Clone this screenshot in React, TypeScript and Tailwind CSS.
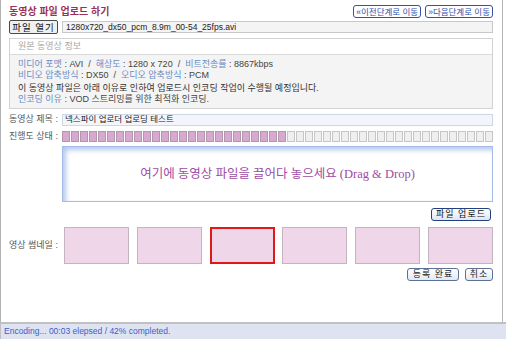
import React from 'react';

const FONT = { fontFamily: '"Liberation Sans", "Noto Sans CJK KR", sans-serif' };

const labelCls = 'text-[#6a8cc4]';
const valueCls = 'text-[#444]';

function SmallButton({ children, className = '' }: { children: React.ReactNode; className?: string }) {
  return (
    <button
      className={
        'h-[13px] whitespace-nowrap rounded-[3px] border border-[#5a7296] bg-gradient-to-b from-white to-[#e3e8f2] text-[9px] leading-[11px] tracking-[1px] text-[#222] ' +
        className
      }
    >
      {children}
    </button>
  );
}

export default function App() {
  const total = 48;
  const filled = 25;
  const cells = Array.from({ length: total }, (_, i) => i < filled);
  const thumbs = [0, 1, 2, 3, 4, 5];

  return (
    <div className="flex h-[339px] w-[506px] flex-col bg-white text-[11px]" style={FONT}>
      <div className="mr-[3px] flex flex-1 flex-col border-l border-r border-[#b4b4b4] pl-[8px] pr-[9px]">
        {/* title row */}
        <div className="mt-[5px] flex h-[13px] items-center justify-between">
          <div className="whitespace-nowrap text-[10px] font-bold text-[#9c2f58]">동영상 파일 업로드 하기</div>
          <div className="flex gap-[4px]">
            <button className="h-[13px] whitespace-nowrap rounded-[3px] border border-[#3552a6] bg-white px-[2px] text-[8.5px] leading-[10px] text-[#2d4cae]">
              «이전단계로 이동
            </button>
            <button className="h-[13px] whitespace-nowrap rounded-[3px] border border-[#3552a6] bg-white px-[2px] text-[8.5px] leading-[10px] text-[#2d4cae]">
              »다음단계로 이동
            </button>
          </div>
        </div>

        {/* file open row */}
        <div className="mt-[2px] flex items-center gap-[4px]">
          <button className="h-[14px] w-[49px] whitespace-nowrap rounded-[2px] border border-[#4a4a4a] bg-[#f0f0f0] text-[9.5px] leading-[11px] tracking-[1px] text-[#111]">
            파일 열기
          </button>
          <div className="flex h-[12px] flex-1 items-center border border-[#c8c8c8] bg-[#f4f4f4] pl-[3px] text-[8.5px] text-[#222]">
            1280x720_dx50_pcm_8.9m_00-54_25fps.avi
          </div>
        </div>

        {/* info box */}
        <div className="mt-[4px] h-[71px] border border-[#d2d2d2]">
          <div className="flex h-[16px] items-center border-b border-[#dadada] bg-white pl-[8px] text-[9px] text-[#a8a8a8]">
            원본 동영상 정보
          </div>
          <div className="h-[53px] whitespace-nowrap bg-[#f4f4f4] pl-[8px] pt-[4px] text-[9px] leading-[11px]">
            <div>
              <span className={labelCls}>미디어 포맷</span>
              <span className={valueCls}> : AVI &nbsp;/ &nbsp;</span>
              <span className={labelCls}>해상도</span>
              <span className={valueCls}> : 1280 x 720 &nbsp;/ &nbsp;</span>
              <span className={labelCls}>비트전송률</span>
              <span className={valueCls}> : 8867kbps</span>
            </div>
            <div>
              <span className={labelCls}>비디오 압축방식</span>
              <span className={valueCls}> : DX50 &nbsp;/ &nbsp;</span>
              <span className={labelCls}>오디오 압축방식</span>
              <span className={valueCls}> : PCM</span>
            </div>
            <div className="mt-[2px] text-[#333]">
              이 동영상 파일은 아래 이유로 인하여 업로드시 인코딩 작업이 수행될 예정입니다.
            </div>
            <div>
              <span className={labelCls}>인코딩 이유</span>
              <span className={valueCls}> : VOD 스트리밍를 위한 최적화 인코딩.</span>
            </div>
          </div>
        </div>

        {/* title row */}
        <div className="mt-[4px] flex items-center">
          <div className="w-[53px] shrink-0 whitespace-nowrap text-[9px] text-[#555]">동영상 제목 :</div>
          <div className="flex h-[12px] flex-1 items-center border border-[#cdd6e2] bg-[#f2f6fc] pl-[2px] text-[8.5px] text-[#222]">
            넥스파이 업로더 업로딩 테스트
          </div>
        </div>

        {/* progress row */}
        <div className="mt-[3px] flex items-center">
          <div className="w-[53px] shrink-0 whitespace-nowrap text-[9px] text-[#555]">진행도 상태 :</div>
          <div className="flex flex-1 gap-[1px]">
            {cells.map((on, i) => (
              <div
                key={i}
                className={
                  on
                    ? 'h-[11px] w-[8px] border border-[#b097ab] bg-[#d9a8d0]'
                    : 'h-[11px] w-[8px] border border-[#c6c6c6] bg-[#efefef]'
                }
              />
            ))}
          </div>
        </div>

        {/* drop zone */}
        <div className="ml-[53px] mt-[3px] flex h-[56px] items-center justify-center border border-[#a3bbe6] bg-white shadow-[inset_3px_3px_5px_#b4c8ee]">
          <span
            className="whitespace-nowrap text-[12.5px] text-[#a04ca6]"
            style={{ fontFamily: '"Liberation Serif", "Noto Sans CJK KR", serif' }}
          >
            여기에 동영상 파일을 끌어다 놓으세요 (Drag &amp; Drop)
          </span>
        </div>

        {/* upload button */}
        <div className="mt-[6px] flex justify-end pr-[2px]">
          <button className="h-[13px] w-[60px] whitespace-nowrap rounded-[3px] border border-[#23417e] bg-gradient-to-b from-white to-[#dfe6f4] text-[9px] leading-[11px] tracking-[1px] text-[#111]">
            파일 업로드
          </button>
        </div>

        {/* thumbnails */}
        <div className="mt-[6px] flex items-center">
          <div className="w-[55px] shrink-0 whitespace-nowrap text-[9px] text-[#555]">영상 썸네일 :</div>
          <div className="flex flex-1 justify-between">
            {thumbs.map((t) => (
              <div
                key={t}
                className={
                  t === 2
                    ? 'h-[37px] w-[65px] border-2 border-[#e01818] bg-[#efd6e8]'
                    : 'h-[37px] w-[65px] border border-[#c4b4c0] bg-[#efd6e8]'
                }
              />
            ))}
          </div>
        </div>

        {/* action buttons */}
        <div className="mt-[4px] flex justify-end gap-[6px]">
          <SmallButton className="w-[52px]">등록 완료</SmallButton>
          <SmallButton className="w-[28px]">취소</SmallButton>
        </div>
      </div>

      {/* status bar */}
      <div className="flex h-[17px] items-center border-l border-t-2 border-[#c0c0c0] bg-[#dfe3f1] pl-[3px] text-[8.5px] text-[#3a60c8]">
        Encoding... 00:03 elepsed / 42% completed.
      </div>
    </div>
  );
}
